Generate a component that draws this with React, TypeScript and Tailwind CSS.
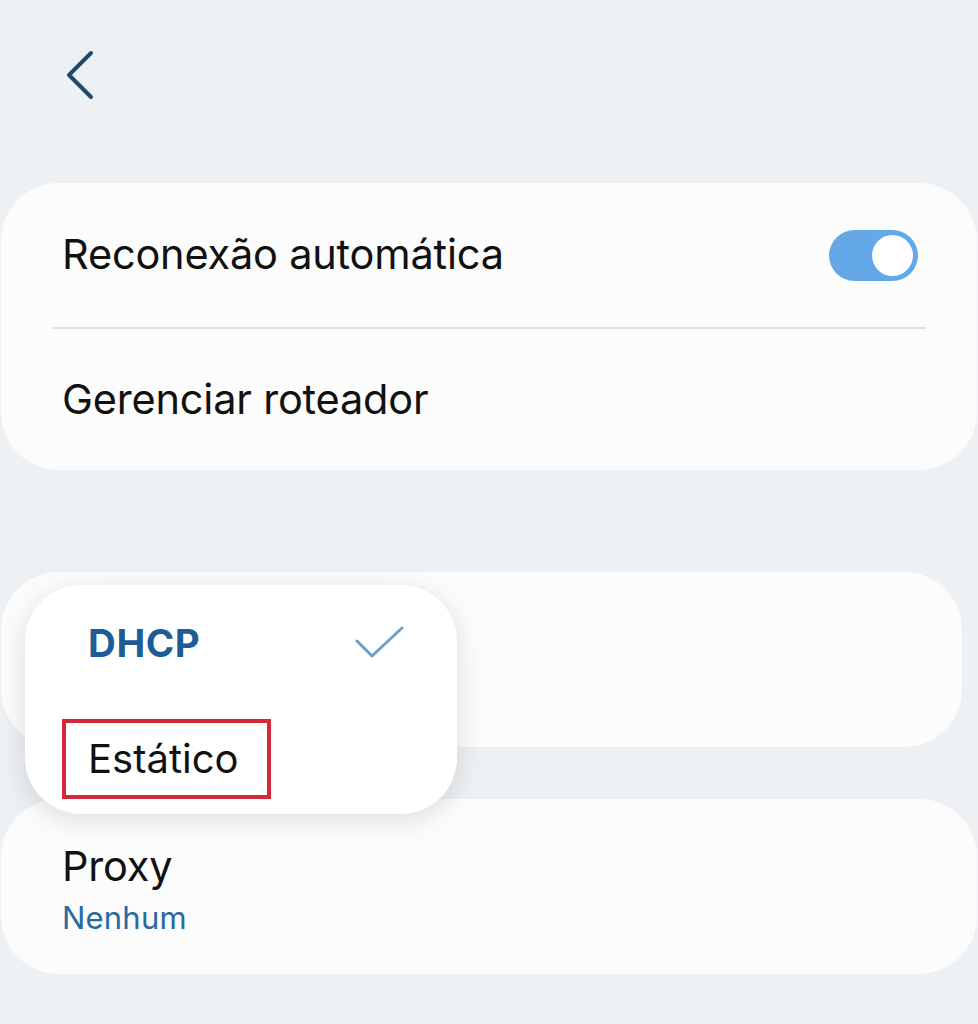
export default function App() {
  return (
    <div
      className="relative min-h-screen overflow-hidden bg-[#eef1f4] text-[#111]"
      style={{ fontFamily: "Inter, 'Noto Sans', sans-serif" }}
    >
      {/* Top bar */}
      <div className="h-[183px] pl-[64px] pt-[49px]">
        <svg width="32" height="52" viewBox="0 0 32 52" fill="none">
          <path d="M27 4 L5 26 L27 48" stroke="#1f4a6d" strokeWidth="4" strokeLinecap="round" strokeLinejoin="round" />
        </svg>
      </div>

      {/* Card 1 */}
      <div className="ml-px w-[976px] rounded-[58px] bg-[#fcfcfc]">
        <div className="flex h-[144px] items-center justify-between pl-[61px] pr-[59px]">
          <span className="text-[41.5px] leading-none tracking-[-0.2px]">Reconexão automática</span>
          <div className="flex h-[51px] w-[89px] items-center justify-end rounded-full bg-[#65a8e8] pr-[5px]">
            <div className="h-[41px] w-[41px] rounded-full bg-white" />
          </div>
        </div>
        <div className="mx-[51px] h-[2px] bg-[#dfe2e5]" />
        <div className="flex h-[141px] items-center pl-[61px]">
          <span className="text-[41.5px] leading-none tracking-[-0.2px]">Gerenciar roteador</span>
        </div>
      </div>

      {/* Card 2 (covered by the menu) */}
      <div className="ml-px mt-[102px] h-[175px] w-[961px] rounded-[58px] bg-[#fcfcfc]" />

      {/* Card 3 */}
      <div className="ml-px mt-[52px] flex h-[175px] w-[976px] flex-col justify-center rounded-[58px] bg-[#fcfcfc] pl-[61px] pt-[6px]">
        <span className="text-[41.5px] leading-none tracking-[-0.2px]">Proxy</span>
        <span className="mt-[15px] text-[31px] leading-none tracking-[0.2px] text-[#2a68a0]">Nenhum</span>
      </div>

      {/* Dropdown menu */}
      <div className="absolute left-[25px] top-[585px] h-[229px] w-[432px] rounded-[56px] bg-white shadow-[0_6px_28px_rgba(0,0,0,0.13)]">
        <div className="flex h-[116px] items-center justify-between pl-[63px] pr-[52px]">
          <span className="text-[38.5px] font-bold leading-none tracking-[0.6px] text-[#1d5d96]">DHCP</span>
          <svg width="50" height="34" viewBox="0 0 50 34" fill="none">
            <path d="M2 15 L17 30 L47 2" stroke="#6d9fca" strokeWidth="3" strokeLinecap="round" strokeLinejoin="round" />
          </svg>
        </div>
        <div className="ml-[37px] mt-[18px] flex h-[80px] w-[209px] items-center border-[4px] border-[#d42936] pl-[22px]">
          <span className="text-[40px] leading-none">Estático</span>
        </div>
      </div>
    </div>
  );
}
